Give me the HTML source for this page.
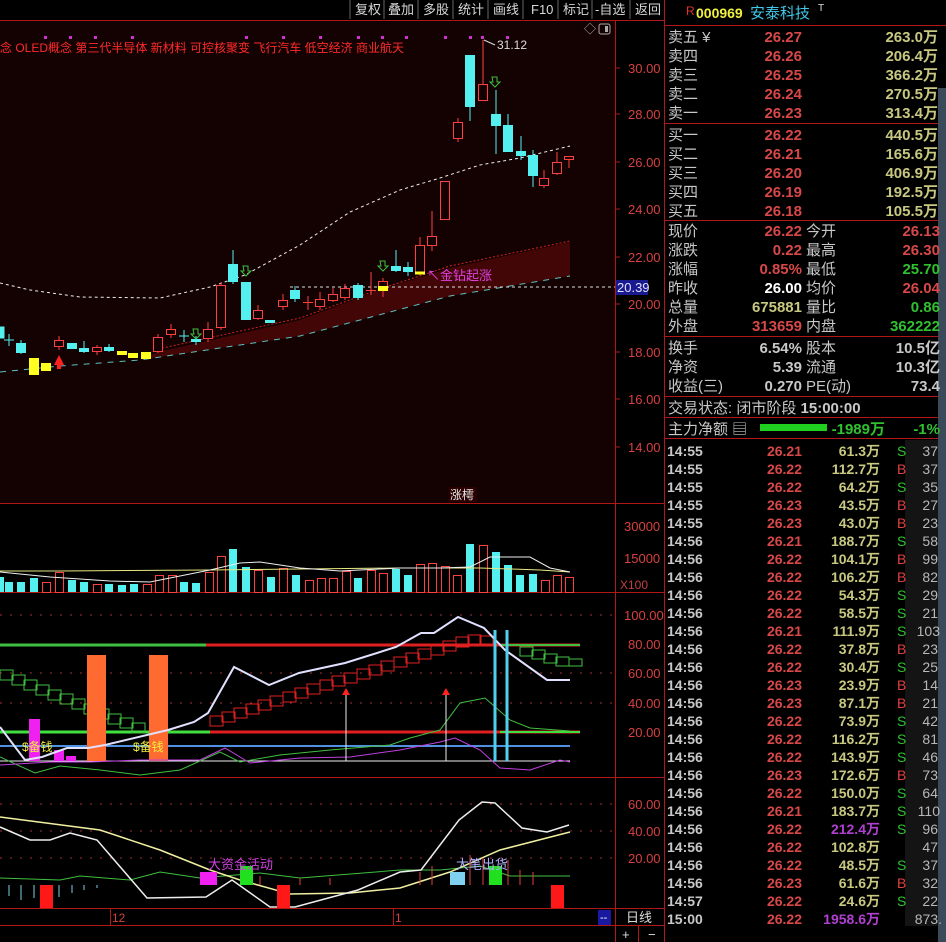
<!DOCTYPE html>
<html><head><meta charset="utf-8"><style>
html,body{margin:0;padding:0;background:#000;width:946px;height:942px;overflow:hidden}
svg{display:block}
text{font-family:"Liberation Sans","Noto Sans CJK SC",sans-serif}
</style></head><body>
<svg width="946" height="942" viewBox="0 0 946 942" xmlns="http://www.w3.org/2000/svg">
<rect width="946" height="942" fill="#000"/>
<rect x="0" y="21" width="615" height="482" fill="#140202"/>
<g font-size="13" fill="#d8d8d8">
<line x1="350" y1="0" x2="350" y2="19" stroke="#666"/>
<text x="355" y="14">复权</text><line x1="384" y1="0" x2="384" y2="19" stroke="#666"/>
<text x="388" y="14">叠加</text><line x1="418" y1="0" x2="418" y2="19" stroke="#666"/>
<text x="423" y="14">多股</text><line x1="453" y1="0" x2="453" y2="19" stroke="#666"/>
<text x="458" y="14">统计</text><line x1="488" y1="0" x2="488" y2="19" stroke="#666"/>
<text x="493" y="14">画线</text><line x1="523" y1="0" x2="523" y2="19" stroke="#666"/>
<text x="531" y="14">F10</text><line x1="558" y1="0" x2="558" y2="19" stroke="#666"/>
<text x="563" y="14">标记</text><line x1="592" y1="0" x2="592" y2="19" stroke="#666"/>
<text x="595" y="14">-自选</text><line x1="630" y1="0" x2="630" y2="19" stroke="#666"/>
<text x="635" y="14">返回</text>
</g>
<line x1="0" y1="20.5" x2="664" y2="20.5" stroke="#b01818"/>
<g stroke="#b01818" stroke-width="1">
<line x1="0" y1="503.5" x2="664" y2="503.5"/>
<line x1="0" y1="592.5" x2="664" y2="592.5"/>
<line x1="0" y1="777.5" x2="664" y2="777.5"/>
<line x1="0" y1="908.5" x2="664" y2="908.5"/>
<line x1="0" y1="925.5" x2="664" y2="925.5"/>
<line x1="615.5" y1="21" x2="615.5" y2="942"/>
<line x1="664.5" y1="0" x2="664.5" y2="942"/>
</g>
<g font-size="13" fill="#d84040">
<text x="628" y="73">30.00</text><text x="628" y="119">28.00</text><text x="628" y="167">26.00</text>
<text x="628" y="214">24.00</text><text x="628" y="262">22.00</text><text x="628" y="309">20.00</text>
<text x="628" y="357">18.00</text><text x="628" y="404">16.00</text><text x="628" y="452">14.00</text>
<text x="624" y="531">30000</text><text x="624" y="563">15000</text>
<text x="624" y="620">100.00</text><text x="628" y="649">80.00</text><text x="628" y="678">60.00</text>
<text x="628" y="708">40.00</text><text x="628" y="737">20.00</text>
<text x="628" y="809">60.00</text><text x="628" y="836">40.00</text><text x="628" y="863">20.00</text>
</g>
<g stroke="#b01818"><line x1="615" y1="68" x2="620" y2="68"/><line x1="615" y1="114" x2="620" y2="114"/><line x1="615" y1="162" x2="620" y2="162"/><line x1="615" y1="209" x2="620" y2="209"/><line x1="615" y1="257" x2="620" y2="257"/><line x1="615" y1="304" x2="620" y2="304"/><line x1="615" y1="352" x2="620" y2="352"/><line x1="615" y1="399" x2="620" y2="399"/><line x1="615" y1="447" x2="620" y2="447"/></g>
<text x="620" y="589" font-size="12" fill="#c04040">X100</text>
<rect x="616" y="280" width="32" height="15" fill="#1a1a90"/>
<text x="617" y="292" font-size="13" fill="#e0e0ff">20.39</text>
<text x="584" y="33" font-size="12" fill="#aaa">◇</text>
<rect x="599" y="24" width="11" height="10" fill="none" stroke="#aaa" rx="2"/><rect x="605" y="26" width="3" height="6" fill="#aaa"/>
<g fill="#d030d0"><rect x="44" y="36" width="3" height="3"/><rect x="69" y="36" width="3" height="3"/><rect x="94" y="36" width="3" height="3"/><rect x="131" y="36" width="3" height="3"/><rect x="245" y="36" width="3" height="3"/><rect x="282" y="36" width="3" height="3"/><rect x="319" y="36" width="3" height="3"/><rect x="357" y="36" width="3" height="3"/><rect x="381" y="36" width="3" height="3"/><rect x="405" y="36" width="3" height="3"/><rect x="444" y="36" width="3" height="3"/><rect x="469" y="36" width="3" height="3"/><rect x="481" y="36" width="3" height="3"/><rect x="506" y="36" width="3" height="3"/></g>
<text x="0" y="52" font-size="12" fill="#ff2a2a" textLength="404">念 OLED概念 第三代半导体 新材料 可控核聚变 飞行汽车 低空经济 商业航天</text>
<text x="497" y="49" font-size="12" fill="#ddd">31.12</text>
<path d="M484,40 L495,45" stroke="#ddd" fill="none"/>
<polygon points="158,352 300,320 380,290 450,268 570,242 570,276 450,296 300,336 140,360 158,352" fill="#420606"/>
<polyline points="158,349 300,318 380,289 450,266 570,241" fill="none" stroke="#d02020" stroke-dasharray="2,2"/>
<polyline points="0,372 60,366 140,360 300,336 450,296 570,276" fill="none" stroke="#60c0c0" stroke-dasharray="6,6"/>
<line x1="290" y1="287" x2="615" y2="287" stroke="#ddd" stroke-dasharray="3,3"/>
<polyline points="0,283 30,290 80,297 160,298 210,287 245,275 300,245 350,212 400,190 440,178 480,165 520,158 570,146" fill="none" stroke="#eee" stroke-dasharray="3,3"/>
<g stroke-width="1">
<g stroke="#ff4040" fill="#140202">
<line x1="59" y1="336" x2="59" y2="350"/><rect x="54.5" y="340.5" width="9" height="6"/>
<line x1="97" y1="345" x2="97" y2="355"/><rect x="92.5" y="347.5" width="9" height="4"/>
<line x1="158" y1="334" x2="158" y2="353"/><rect x="153.5" y="337.5" width="9" height="14"/>
<line x1="171" y1="324" x2="171" y2="338"/><rect x="166.5" y="329.5" width="9" height="5"/>
<line x1="208" y1="322" x2="208" y2="342"/><rect x="203.5" y="329.5" width="9" height="9"/>
<line x1="221" y1="282" x2="221" y2="330"/><rect x="216.5" y="285.5" width="9" height="42"/>
<line x1="258" y1="305" x2="258" y2="320"/><rect x="253.5" y="310.5" width="9" height="8"/>
<line x1="283" y1="294" x2="283" y2="310"/><rect x="278.5" y="300.5" width="9" height="6"/>
<line x1="308" y1="296" x2="308" y2="310"/><line x1="303" y1="302.5" x2="313" y2="302.5"/>
<line x1="320" y1="292" x2="320" y2="310"/><rect x="315.5" y="299.5" width="9" height="7"/>
<line x1="333" y1="288" x2="333" y2="302"/><rect x="328.5" y="294.5" width="9" height="6"/>
<line x1="345" y1="284" x2="345" y2="300"/><rect x="340.5" y="288.5" width="9" height="9"/>
<line x1="371" y1="272" x2="371" y2="295"/><line x1="366" y1="290.5" x2="376" y2="290.5"/>
<line x1="383" y1="278" x2="383" y2="297"/><rect x="378.5" y="281.5" width="9" height="9"/>
<line x1="420" y1="237" x2="420" y2="275"/><rect x="415.5" y="245.5" width="9" height="27"/>
<line x1="432" y1="211" x2="432" y2="251"/><rect x="427.5" y="236.5" width="9" height="9"/>
<rect x="440.5" y="181.5" width="9" height="38"/>
<line x1="458" y1="118" x2="458" y2="142"/><rect x="453.5" y="122.5" width="9" height="16"/>
<line x1="483" y1="40" x2="483" y2="100"/><rect x="478.5" y="84.5" width="9" height="16"/>
<line x1="544" y1="170" x2="544" y2="188"/><rect x="539.5" y="178.5" width="9" height="7"/>
<line x1="557" y1="152" x2="557" y2="175"/><rect x="552.5" y="162.5" width="9" height="11"/>
<line x1="569" y1="156" x2="569" y2="168"/><rect x="564.5" y="156.5" width="9" height="3"/>
</g>
<g stroke="#54f0f0" fill="#54f0f0">
<rect x="-4" y="327" width="8" height="11"/>
<line x1="9" y1="334" x2="9" y2="346"/><line x1="4" y1="340" x2="14" y2="340"/>
<line x1="21" y1="340" x2="21" y2="354"/><rect x="16.5" y="343.5" width="9" height="9"/>
<rect x="67.5" y="343.5" width="9" height="5"/>
<line x1="84" y1="341" x2="84" y2="353"/><rect x="79.5" y="348.5" width="9" height="3"/>
<line x1="109" y1="344" x2="109" y2="352"/><rect x="104.5" y="347.5" width="9" height="3"/>
<line x1="184" y1="330" x2="184" y2="342"/><line x1="179" y1="336" x2="189" y2="336"/>
<line x1="196" y1="336" x2="196" y2="345"/><rect x="191.5" y="339.5" width="9" height="2"/>
<line x1="233" y1="250" x2="233" y2="284"/><rect x="228.5" y="264.5" width="9" height="17"/>
<rect x="241.5" y="282.5" width="9" height="37"/>
<rect x="265.5" y="320.5" width="9" height="2"/>
<line x1="295" y1="286" x2="295" y2="302"/><rect x="290.5" y="290.5" width="9" height="8"/>
<line x1="358" y1="283" x2="358" y2="300"/><rect x="353.5" y="285.5" width="9" height="12"/>
<line x1="396" y1="250" x2="396" y2="272"/><rect x="391.5" y="266.5" width="9" height="4"/>
<line x1="408" y1="262" x2="408" y2="276"/><rect x="403.5" y="267.5" width="9" height="4"/>
<line x1="470" y1="55" x2="470" y2="121"/><rect x="465.5" y="55.5" width="9" height="51"/>
<line x1="496" y1="90" x2="496" y2="154"/><rect x="491.5" y="114.5" width="9" height="11"/>
<line x1="508" y1="114" x2="508" y2="152"/><rect x="503.5" y="125.5" width="9" height="26"/>
<line x1="521" y1="136" x2="521" y2="160"/><rect x="516.5" y="151.5" width="9" height="4"/>
<line x1="533" y1="150" x2="533" y2="187"/><rect x="528.5" y="155.5" width="9" height="20"/>
</g>
<g fill="#ffff20" stroke="#ffff20">
<rect x="29.5" y="358.5" width="9" height="16"/><rect x="41.5" y="363.5" width="9" height="7"/>
<rect x="117.5" y="351.5" width="9" height="3"/><rect x="128.5" y="353.5" width="9" height="4"/>
<rect x="141.5" y="352.5" width="9" height="6"/><rect x="378.5" y="286.5" width="9" height="4"/>
<rect x="415.5" y="272" width="9" height="2"/>
</g>
<path d="M54,365 L59,355 L64,365 Z M57,365 h4 v4 h-4z" fill="#ff2020"/>
<g fill="none" stroke="#40c040">
<path d="M193,329 h5 v5 h3 l-5,5 l-5,-5 h3z"/><path d="M243,266 h5 v5 h3 l-5,5 l-5,-5 h3z"/>
<path d="M380,261 h5 v5 h3 l-5,5 l-5,-5 h3z"/><path d="M492,77 h5 v5 h3 l-5,5 l-5,-5 h3z"/>
</g>
</g>
<text x="427" y="280" font-size="13" fill="#e040e0">↖金钻起涨</text>
<rect x="449" y="487" width="28" height="15" fill="#2a0000"/>
<text x="450" y="499" font-size="12" fill="#e8e8e8">涨樗</text>
<g fill="#54f0f0">
<rect x="-4" y="577" width="8" height="15"/><rect x="5" y="582" width="8" height="10"/><rect x="17" y="582" width="8" height="10"/><rect x="30" y="578" width="8" height="14"/>
<rect x="68" y="580" width="8" height="12"/><rect x="80" y="582" width="8" height="10"/><rect x="105" y="584" width="8" height="8"/><rect x="118" y="585" width="8" height="7"/><rect x="130" y="584" width="8" height="8"/>
<rect x="180" y="582" width="8" height="10"/><rect x="192" y="583" width="8" height="9"/><rect x="229" y="549" width="8" height="43"/><rect x="242" y="567" width="8" height="25"/>
<rect x="267" y="577" width="8" height="15"/><rect x="292" y="575" width="8" height="17"/><rect x="354" y="578" width="8" height="14"/>
<rect x="392" y="569" width="8" height="23"/><rect x="404" y="575" width="8" height="17"/><rect x="466" y="544" width="8" height="48"/><rect x="492" y="552" width="8" height="40"/>
<rect x="504" y="565" width="8" height="27"/><rect x="516" y="575" width="8" height="17"/><rect x="529" y="574" width="8" height="18"/>
</g>
<g fill="none" stroke="#ff4040">
<rect x="42.5" y="582.5" width="8" height="10"/><rect x="55.5" y="572.5" width="8" height="20"/><rect x="93.5" y="584.5" width="8" height="8"/><rect x="143.5" y="584.5" width="8" height="8"/>
<rect x="155.5" y="575.5" width="8" height="17"/><rect x="168.5" y="575.5" width="8" height="17"/><rect x="205.5" y="572.5" width="8" height="20"/><rect x="217.5" y="556.5" width="8" height="36"/>
<rect x="254.5" y="570.5" width="8" height="22"/><rect x="279.5" y="568.5" width="8" height="24"/><rect x="305.5" y="580.5" width="8" height="12"/><rect x="317.5" y="578.5" width="8" height="14"/>
<rect x="329.5" y="578.5" width="8" height="14"/><rect x="342.5" y="571.5" width="8" height="21"/><rect x="367.5" y="570.5" width="8" height="22"/><rect x="379.5" y="573.5" width="8" height="19"/>
<rect x="416.5" y="564.5" width="8" height="28"/><rect x="428.5" y="563.5" width="8" height="29"/><rect x="441.5" y="566.5" width="8" height="26"/><rect x="453.5" y="575.5" width="8" height="17"/>
<rect x="479.5" y="545.5" width="8" height="47"/><rect x="541.5" y="580.5" width="8" height="12"/><rect x="553.5" y="575.5" width="8" height="17"/><rect x="565.5" y="577.5" width="8" height="15"/>
</g>
<polyline points="0,571 60,571 210,570 300,569 400,568 480,568 540,570 570,572" fill="none" stroke="#e8e880"/>
<polyline points="0,572 50,577 110,581 150,582 210,570 240,563 260,562 300,568 340,571 400,568 440,568 470,567 490,557 530,557 550,568 570,572" fill="none" stroke="#eee"/>
<g stroke-dasharray="2,8" stroke="#a03030"><line x1="0" y1="615" x2="615" y2="615"/><line x1="0" y1="673" x2="615" y2="673"/><line x1="0" y1="703" x2="615" y2="703"/><line x1="0" y1="804" x2="615" y2="804"/><line x1="0" y1="831" x2="615" y2="831"/><line x1="0" y1="858" x2="615" y2="858"/></g>
<line x1="0" y1="645" x2="206" y2="645" stroke="#40c040" stroke-width="3"/>
<line x1="206" y1="645" x2="580" y2="645" stroke="#e02020" stroke-width="3"/>
<line x1="500" y1="645" x2="580" y2="645" stroke="#40c040" stroke-width="2"/>
<line x1="0" y1="732" x2="210" y2="732" stroke="#40e040" stroke-width="3"/>
<line x1="210" y1="732" x2="580" y2="732" stroke="#e02020" stroke-width="3"/>
<line x1="500" y1="732" x2="580" y2="732" stroke="#40e040" stroke-width="2"/>
<line x1="0" y1="746" x2="570" y2="746" stroke="#5090e0" stroke-width="2"/>
<line x1="0" y1="761" x2="570" y2="761" stroke="#eee"/>
<g fill="none" stroke="#40c040">
<rect x="0" y="670" width="13" height="10"/><rect x="12" y="675" width="13" height="10"/><rect x="24" y="680" width="13" height="10"/><rect x="36" y="685" width="13" height="10"/><rect x="48" y="690" width="13" height="10"/><rect x="60" y="694" width="13" height="10"/><rect x="72" y="699" width="13" height="10"/><rect x="84" y="704" width="13" height="10"/><rect x="96" y="709" width="13" height="10"/><rect x="108" y="714" width="13" height="10"/><rect x="120" y="718" width="13" height="10"/><rect x="132" y="723" width="13" height="10"/>
<rect x="520" y="647" width="13" height="9"/><rect x="532" y="650" width="13" height="9"/><rect x="544" y="654" width="13" height="9"/><rect x="556" y="657" width="13" height="9"/><rect x="569" y="659" width="13" height="7"/>
</g>
<g fill="none" stroke="#e02020">
<rect x="210" y="716" width="13" height="10"/><rect x="222" y="712" width="13" height="10"/><rect x="234" y="708" width="13" height="10"/><rect x="246" y="704" width="13" height="10"/><rect x="258" y="700" width="13" height="10"/><rect x="270" y="696" width="13" height="10"/><rect x="283" y="692" width="13" height="10"/><rect x="295" y="688" width="13" height="10"/><rect x="307" y="684" width="13" height="10"/><rect x="320" y="680" width="13" height="10"/><rect x="332" y="676" width="13" height="10"/><rect x="344" y="673" width="13" height="10"/><rect x="357" y="669" width="13" height="10"/><rect x="369" y="665" width="13" height="10"/><rect x="381" y="661" width="13" height="10"/><rect x="394" y="657" width="13" height="10"/><rect x="406" y="653" width="13" height="10"/><rect x="418" y="649" width="13" height="10"/><rect x="431" y="645" width="13" height="10"/><rect x="443" y="641" width="13" height="10"/><rect x="456" y="637" width="13" height="10"/><rect x="468" y="635" width="13" height="10"/><rect x="480" y="636" width="13" height="8"/>
</g>
<rect x="87" y="655" width="19" height="106" fill="#ff6a30"/>
<rect x="149" y="655" width="19" height="106" fill="#ff6a30"/>
<rect x="29" y="719" width="11" height="42" fill="#f020f0"/>
<rect x="54" y="750" width="10" height="11" fill="#f020f0"/><rect x="66" y="756" width="10" height="5" fill="#f020f0"/>
<polyline points="0,757 35,773 60,766 100,770 140,775 180,770 220,752 240,762 280,755 330,750 390,745 410,738 440,730 460,703 485,698 510,720 530,728 570,731" fill="none" stroke="#40c040"/>
<polyline points="0,765 50,762 90,762 140,760 200,760 225,748 250,763 300,758 350,757 400,750 440,742 455,738 480,750 500,768 530,770 560,760 570,762" fill="none" stroke="#c040e0"/>
<polyline points="0,727 25,760 42,757 67,748 88,748 105,745 168,730 194,722 208,713 234,667 269,685 299,673 345,663 396,647 421,633 434,633 458,617 484,628 505,650 547,680 570,680" fill="none" stroke="#e0e0ff" stroke-width="2"/>
<line x1="495" y1="630" x2="495" y2="761" stroke="#50d0f0" stroke-width="3"/>
<line x1="507" y1="630" x2="507" y2="761" stroke="#50d0f0" stroke-width="3"/>
<line x1="346" y1="694" x2="346" y2="761" stroke="#eee"/><path d="M342,695 L346,688 L350,695Z" fill="#ff2020"/>
<line x1="446" y1="694" x2="446" y2="761" stroke="#eee"/><path d="M442,695 L446,688 L450,695Z" fill="#ff2020"/>
<text x="22" y="751" font-size="12" fill="#f0f040">$备钱</text>
<text x="133" y="751" font-size="12" fill="#f0f040">$备钱</text>
<polyline points="0,878 60,880 80,876 130,880 160,872 200,878 260,873 300,878 400,870 440,870 480,866 510,876 570,876" fill="none" stroke="#40c040"/>
<polyline points="0,817 100,830 160,850 210,870 240,880 290,894 350,893 400,888 450,872 500,850 570,832" fill="none" stroke="#f0f0a0" stroke-width="1.5"/>
<polyline points="0,827 30,840 50,840 70,833 97,840 147,898 206,897 232,880 270,907 295,907 358,890 400,872 421,870 459,820 482,802 495,803 522,828 547,832 569,825" fill="none" stroke="#eee" stroke-width="1.5"/>
<g stroke="#80d0e0"><line x1="9" y1="885" x2="9" y2="896"/><line x1="21" y1="885" x2="21" y2="900"/><line x1="34" y1="885" x2="34" y2="898"/><line x1="59" y1="885" x2="59" y2="897"/><line x1="72" y1="885" x2="72" y2="893"/><line x1="84" y1="885" x2="84" y2="890"/><line x1="97" y1="885" x2="97" y2="888"/></g>
<g stroke="#e04040"><line x1="260" y1="876" x2="260" y2="885"/><line x1="300" y1="878" x2="300" y2="885"/><line x1="330" y1="878" x2="330" y2="885"/><line x1="420" y1="872" x2="420" y2="885"/><line x1="432" y1="866" x2="432" y2="885"/><line x1="470" y1="855" x2="470" y2="885"/><line x1="483" y1="858" x2="483" y2="885"/><line x1="508" y1="860" x2="508" y2="885"/><line x1="520" y1="870" x2="520" y2="885"/><line x1="533" y1="872" x2="533" y2="885"/></g>
<rect x="40" y="885" width="13" height="23" fill="#ff1818"/>
<rect x="277" y="885" width="13" height="23" fill="#ff1818"/>
<rect x="551" y="885" width="13" height="23" fill="#ff1818"/>
<rect x="200" y="872" width="17" height="13" fill="#f020f0"/>
<rect x="240" y="866" width="13" height="19" fill="#20e020"/>
<rect x="450" y="872" width="15" height="13" fill="#80d0f0"/>
<rect x="489" y="866" width="13" height="19" fill="#20e020"/>
<text x="208" y="869" font-size="13" fill="#d040e0">大资金活动</text>
<text x="456" y="869" font-size="13" fill="#b0b0ff">大笔出货</text>
<text x="112" y="922" font-size="12" fill="#d04040">12</text>
<line x1="110.5" y1="909" x2="110.5" y2="925" stroke="#b01818"/>
<text x="395" y="922" font-size="12" fill="#d04040">1</text>
<line x1="393.5" y1="909" x2="393.5" y2="925" stroke="#b01818"/>
<rect x="598" y="910" width="13" height="15" fill="#1818a0"/><text x="600" y="921" font-size="11" fill="#fff">--</text>
<text x="626" y="922" font-size="13" fill="#ddd">日线</text>
<text x="622" y="939" font-size="13" fill="#ddd">+</text><line x1="638.5" y1="926" x2="638.5" y2="942" stroke="#b01818"/>
<text x="648" y="939" font-size="13" fill="#ddd">−</text>

<rect x="938" y="88" width="8" height="854" fill="#3a4a5a"/>
<text x="686" y="15" font-size="12" fill="#e03030">R</text>
<text x="696" y="18" font-size="14" font-weight="bold" fill="#f0f040">000969</text>
<text x="750" y="18" font-size="15" fill="#40c8e8">安泰科技</text>
<text x="818" y="11" font-size="10" fill="#ddd">T</text>
<g stroke="#b01818"><line x1="665" y1="25.5" x2="946" y2="25.5"/><line x1="665" y1="123.5" x2="938" y2="123.5"/><line x1="665" y1="220.5" x2="938" y2="220.5"/><line x1="665" y1="336.5" x2="938" y2="336.5"/><line x1="665" y1="396.5" x2="938" y2="396.5"/><line x1="665" y1="417.5" x2="938" y2="417.5"/><line x1="665" y1="438.5" x2="938" y2="438.5"/></g>
<g font-size="15" font-weight="bold">
<g fill="#c8c8c8" font-weight="normal">
<text x="668" y="42">卖五 ¥</text><text x="668" y="61">卖四</text><text x="668" y="80">卖三</text><text x="668" y="99">卖二</text><text x="668" y="118">卖一</text>
<text x="668" y="140">买一</text><text x="668" y="159">买二</text><text x="668" y="178">买三</text><text x="668" y="197">买四</text><text x="668" y="216">买五</text>
<text x="668" y="236">现价</text><text x="668" y="255">涨跌</text><text x="668" y="274">涨幅</text><text x="668" y="293">昨收</text><text x="668" y="312">总量</text><text x="668" y="331">外盘</text>
<text x="806" y="236">今开</text><text x="806" y="255">最高</text><text x="806" y="274">最低</text><text x="806" y="293">均价</text><text x="806" y="312">量比</text><text x="806" y="331">内盘</text>
<text x="668" y="353">换手</text><text x="668" y="372">净资</text><text x="668" y="391">收益(三)</text>
<text x="806" y="353">股本</text><text x="806" y="372">流通</text><text x="806" y="391">PE(动)</text>
<text x="668" y="413">交易状态: 闭市阶段 <tspan font-weight="bold">15:00:00</tspan></text>
<text x="668" y="434">主力净额 ▤</text>
</g>
<g fill="#d84848" text-anchor="end">
<text x="802" y="42">26.27</text><text x="802" y="61">26.26</text><text x="802" y="80">26.25</text><text x="802" y="99">26.24</text><text x="802" y="118">26.23</text>
<text x="802" y="140">26.22</text><text x="802" y="159">26.21</text><text x="802" y="178">26.20</text><text x="802" y="197">26.19</text><text x="802" y="216">26.18</text>
<text x="802" y="236">26.22</text><text x="802" y="255">0.22</text><text x="802" y="274">0.85%</text><text x="802" y="331">313659</text>
<text x="940" y="236">26.13</text><text x="940" y="255">26.30</text><text x="940" y="293">26.04</text>
</g>
<g fill="#c8c880" text-anchor="end">
<text x="938" y="42">263.0万</text><text x="938" y="61">206.4万</text><text x="938" y="80">366.2万</text><text x="938" y="99">270.5万</text><text x="938" y="118">313.4万</text>
<text x="938" y="140">440.5万</text><text x="938" y="159">165.6万</text><text x="938" y="178">406.9万</text><text x="938" y="197">192.5万</text><text x="938" y="216">105.5万</text>
<text x="802" y="312">675881</text>
</g>
<text x="802" y="293" fill="#fff" text-anchor="end">26.00</text>
<g fill="#30c030" text-anchor="end"><text x="940" y="274">25.70</text><text x="940" y="312">0.86</text><text x="940" y="331">362222</text><text x="885" y="434">-1989万</text><text x="940" y="434">-1%</text></g>
<g fill="#c8c8c8" text-anchor="end"><text x="802" y="353">6.54%</text><text x="802" y="372">5.39</text><text x="802" y="391">0.270</text><text x="940" y="353">10.5亿</text><text x="940" y="372">10.3亿</text><text x="940" y="391">73.4</text></g>
</g>
<rect x="760" y="424" width="67" height="7" fill="#20d020"/>
<rect x="905" y="440" width="33" height="486" fill="#141414"/>
<g font-size="14" font-weight="bold">
<g fill="#c8c8c8">
<text x="667" y="456">14:55</text><text x="667" y="474">14:55</text><text x="667" y="492">14:55</text><text x="667" y="510">14:55</text><text x="667" y="528">14:55</text>
<text x="667" y="546">14:56</text><text x="667" y="564">14:56</text><text x="667" y="582">14:56</text><text x="667" y="600">14:56</text><text x="667" y="618">14:56</text>
<text x="667" y="636">14:56</text><text x="667" y="654">14:56</text><text x="667" y="672">14:56</text><text x="667" y="690">14:56</text><text x="667" y="708">14:56</text>
<text x="667" y="726">14:56</text><text x="667" y="744">14:56</text><text x="667" y="762">14:56</text><text x="667" y="780">14:56</text><text x="667" y="798">14:56</text>
<text x="667" y="816">14:56</text><text x="667" y="834">14:56</text><text x="667" y="852">14:56</text><text x="667" y="870">14:56</text><text x="667" y="888">14:56</text>
<text x="667" y="906">14:57</text><text x="667" y="924">15:00</text>
</g>
<g fill="#d84848" text-anchor="end">
<text x="802" y="456">26.21</text><text x="802" y="474">26.22</text><text x="802" y="492">26.22</text><text x="802" y="510">26.23</text><text x="802" y="528">26.23</text>
<text x="802" y="546">26.21</text><text x="802" y="564">26.22</text><text x="802" y="582">26.22</text><text x="802" y="600">26.22</text><text x="802" y="618">26.22</text>
<text x="802" y="636">26.21</text><text x="802" y="654">26.22</text><text x="802" y="672">26.22</text><text x="802" y="690">26.23</text><text x="802" y="708">26.23</text>
<text x="802" y="726">26.22</text><text x="802" y="744">26.22</text><text x="802" y="762">26.22</text><text x="802" y="780">26.23</text><text x="802" y="798">26.22</text>
<text x="802" y="816">26.21</text><text x="802" y="834">26.22</text><text x="802" y="852">26.22</text><text x="802" y="870">26.22</text><text x="802" y="888">26.23</text>
<text x="802" y="906">26.22</text><text x="802" y="924">26.22</text>
</g>
<g fill="#c8c880" text-anchor="end">
<text x="880" y="456">61.3万</text><text x="880" y="474">112.7万</text><text x="880" y="492">64.2万</text><text x="880" y="510">43.5万</text><text x="880" y="528">43.0万</text>
<text x="880" y="546">188.7万</text><text x="880" y="564">104.1万</text><text x="880" y="582">106.2万</text><text x="880" y="600">54.3万</text><text x="880" y="618">58.5万</text>
<text x="880" y="636">111.9万</text><text x="880" y="654">37.8万</text><text x="880" y="672">30.4万</text><text x="880" y="690">23.9万</text><text x="880" y="708">87.1万</text>
<text x="880" y="726">73.9万</text><text x="880" y="744">116.2万</text><text x="880" y="762">143.9万</text><text x="880" y="780">172.6万</text><text x="880" y="798">150.0万</text>
<text x="880" y="816">183.7万</text><text x="880" y="834" fill="#b040d0">212.4万</text><text x="880" y="852">102.8万</text><text x="880" y="870">48.5万</text><text x="880" y="888">61.6万</text>
<text x="880" y="906">24.6万</text><text x="880" y="924" fill="#b040d0">1958.6万</text>
</g>
<g font-weight="normal">
<text x="897" y="456" fill="#30c030">S</text><text x="897" y="474" fill="#e04040">B</text><text x="897" y="492" fill="#30c030">S</text><text x="897" y="510" fill="#e04040">B</text><text x="897" y="528" fill="#e04040">B</text>
<text x="897" y="546" fill="#30c030">S</text><text x="897" y="564" fill="#e04040">B</text><text x="897" y="582" fill="#e04040">B</text><text x="897" y="600" fill="#30c030">S</text><text x="897" y="618" fill="#30c030">S</text>
<text x="897" y="636" fill="#30c030">S</text><text x="897" y="654" fill="#e04040">B</text><text x="897" y="672" fill="#30c030">S</text><text x="897" y="690" fill="#e04040">B</text><text x="897" y="708" fill="#e04040">B</text>
<text x="897" y="726" fill="#30c030">S</text><text x="897" y="744" fill="#30c030">S</text><text x="897" y="762" fill="#30c030">S</text><text x="897" y="780" fill="#e04040">B</text><text x="897" y="798" fill="#30c030">S</text>
<text x="897" y="816" fill="#30c030">S</text><text x="897" y="834" fill="#30c030">S</text><text x="897" y="870" fill="#30c030">S</text><text x="897" y="888" fill="#e04040">B</text><text x="897" y="906" fill="#30c030">S</text>
</g>
<g fill="#b8b8b8" text-anchor="end" font-weight="normal">
<text x="938" y="456">37</text><text x="938" y="474">37</text><text x="938" y="492">35</text><text x="938" y="510">27</text><text x="938" y="528">23</text>
<text x="938" y="546">58</text><text x="938" y="564">99</text><text x="938" y="582">82</text><text x="938" y="600">29</text><text x="938" y="618">21</text>
<text x="940" y="636">103</text><text x="938" y="654">23</text><text x="938" y="672">25</text><text x="938" y="690">14</text><text x="938" y="708">21</text>
<text x="938" y="726">42</text><text x="938" y="744">81</text><text x="938" y="762">46</text><text x="938" y="780">73</text><text x="938" y="798">64</text>
<text x="940" y="816">110</text><text x="938" y="834">96</text><text x="938" y="852">47</text><text x="938" y="870">37</text><text x="938" y="888">32</text>
<text x="938" y="906">22</text><text x="942" y="924">873.</text>
</g>
</g>
</svg>
</body></html>
